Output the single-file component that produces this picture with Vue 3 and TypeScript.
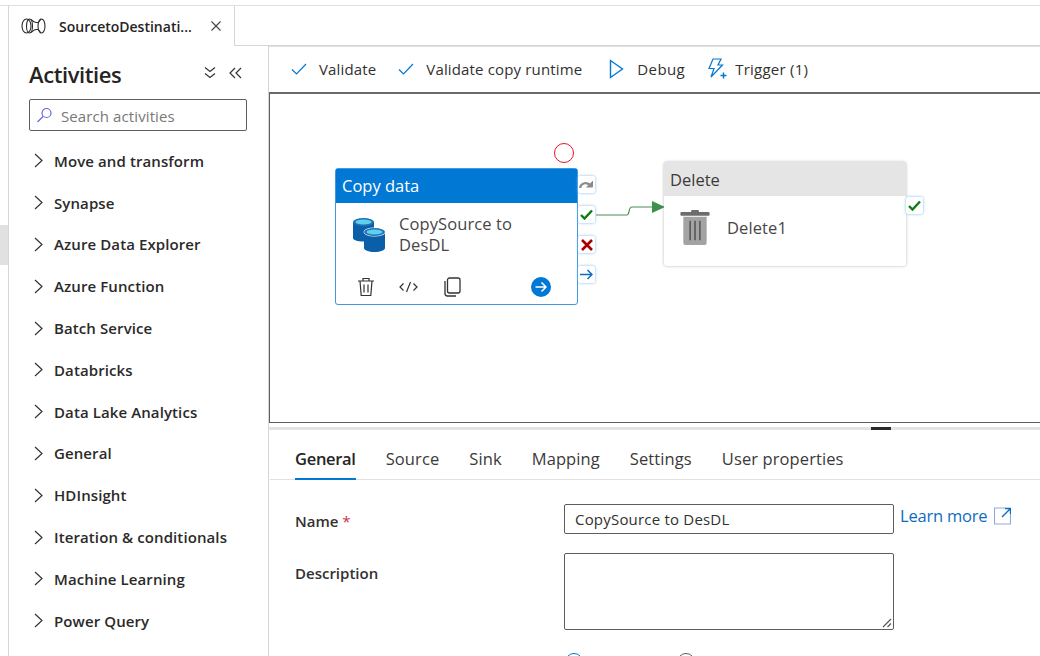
<template>
  <div class="page">
    <div class="rail"><div class="rail-mark"></div></div>
    <div class="main">
      <div class="tabbar">
        <div class="doc-tab">
          <svg class="pipe-icon" width="25" height="16" viewBox="0 0 25 16" fill="none" stroke="#2b2b2b" stroke-width="1.100">
            <ellipse cx="5.500" cy="8" rx="4.500" ry="7" />
            <ellipse cx="8.500" cy="8" rx="3" ry="7" />
            <ellipse cx="20.500" cy="8" rx="3.500" ry="7" />
            <path d="M10 1.500c2 2 4 3 5 3h2c1 0 1.500-2 3-3.500M10 14.500c2-2 4-3 5-3h2c1 0 1.500 2 3 3.500" />
          </svg>
          <span class="doc-title">SourcetoDestinati...</span>
          <svg width="12" height="12" viewBox="0 0 12 12" stroke="#444" stroke-width="1.100"><path d="M1.500 1.500l9 9M10.500 1.500l-9 9" /></svg>
        </div>
        <div class="tab-rest"></div>
      </div>
      <div class="body">
        <aside class="sidebar">
          <div class="side-head">
            <h2>Activities</h2>
            <div class="side-tools">
              <svg width="12" height="13" viewBox="0 0 12 13" fill="none" stroke="#333" stroke-width="1.200"><path d="M1 1.500l5 4 5-4M1 7.500l5 4 5-4" /></svg>
              <svg width="13" height="12" viewBox="0 0 13 12" fill="none" stroke="#333" stroke-width="1.200"><path d="M6 1L1 6l5 5M12 1L7 6l5 5" /></svg>
            </div>
          </div>
          <div class="search">
            <svg width="17" height="17" viewBox="0 0 17 17" fill="none" stroke="#6b69d6" stroke-width="1.200"><circle cx="10.500" cy="6" r="4.500" /><path d="M7 9.500L1.500 15" /></svg>
            <span>Search activities</span>
          </div>
          <ul class="groups">
            <li v-for="g in groups" :key="g">
              <svg width="9" height="15" viewBox="0 0 9 15" fill="none" stroke="#333" stroke-width="1.200"><path d="M1 1l7 6.500L1 14" /></svg>
              <span>{{ g }}</span>
            </li>
          </ul>
        </aside>
        <section class="work">
          <div class="toolbar">
            <div class="tool">
              <svg width="16" height="12" viewBox="0 0 16 12" fill="none" stroke="#0078d4" stroke-width="1.200"><path d="M1 6.500l4.500 4.500L15 1" /></svg>
              <span>Validate</span>
            </div>
            <div class="tool runtime">
              <svg width="16" height="12" viewBox="0 0 16 12" fill="none" stroke="#0078d4" stroke-width="1.200"><path d="M1 6.500l4.500 4.500L15 1" /></svg>
              <span>Validate copy runtime</span>
            </div>
            <div class="tool debug">
              <svg width="15" height="20" viewBox="0 0 15 20" fill="none" stroke="#0078d4" stroke-width="1.400"><path d="M1.500 1.500v17L13.500 10z" /></svg>
              <span>Debug</span>
            </div>
            <div class="tool trigger">
              <svg width="20" height="21" viewBox="0 0 20 21" fill="none" stroke="#0078d4" stroke-width="1.200"><path d="M6 1h8l-3 6h4.500L4 19l3-8.500H2z" /><path d="M13.500 17.500h6M16.500 14.500v6" stroke-width="1.500" /></svg>
              <span>Trigger (1)</span>
            </div>
          </div>
          <div class="canvas">
            <svg class="link" width="70" height="24" viewBox="0 0 70 24" fill="none">
              <path d="M0 18h31c3 0 1-8 5-8h22" stroke="#4c8f54" stroke-width="1.200" />
              <path d="M56 4l13 6-13 6z" fill="#3f8f4d" />
            </svg>

            <div class="breakpoint"></div>

            <div class="node copy">
              <div class="node-head">Copy data</div>
              <div class="node-body">
                <svg width="32" height="34" viewBox="0 0 32 34">
                  <path d="M0 4v16c0 2 4.500 3.500 10.500 3.500S21 22 21 20V4z" fill="#0b5ea8" />
                  <ellipse cx="10.500" cy="4" rx="10.500" ry="4" fill="#1e73b8" />
                  <ellipse cx="10.500" cy="4" rx="8" ry="2.500" fill="#5ed0ec" />
                  <path d="M11 14v16c0 2 4.500 4 10.500 4S32 32 32 30V14z" fill="#0b5ea8" />
                  <ellipse cx="21.500" cy="14" rx="11" ry="4.500" fill="#fff" />
                  <ellipse cx="21.500" cy="14" rx="10.500" ry="4" fill="#1e73b8" />
                  <ellipse cx="21.500" cy="14" rx="8" ry="2.500" fill="#5ed0ec" />
                </svg>
                <span>CopySource to DesDL</span>
              </div>
              <div class="node-actions">
                <svg width="18" height="20" viewBox="0 0 18 20" fill="none" stroke="#333" stroke-width="1.200"><path d="M1 4h16M6 4V1.500h6V4M3 4l1.200 14.500h9.600L15 4M7 7.500v8M11 7.500v8" /></svg>
                <svg class="code" width="19" height="12" viewBox="0 0 19 12" fill="none" stroke="#333" stroke-width="1.200"><path d="M4.500 2.500L1 6l3.500 3.500M14.500 2.500L18 6l-3.500 3.500M11.500 1L7.500 11" /></svg>
                <svg class="clone" width="18" height="20" viewBox="0 0 18 20" fill="none" stroke="#333" stroke-width="1.300"><rect x="4.500" y="1" width="12.500" height="15" rx="2" /><path d="M2 4v12.500A2.500 2.500 0 0 0 4.500 19H13" /></svg>
                <svg class="go" width="20" height="20" viewBox="0 0 20 20"><circle cx="10" cy="10" r="10" fill="#0078d4" /><path d="M4.500 10h10M10.500 5.500l4.500 4.500-4.500 4.500" fill="none" stroke="#fff" stroke-width="1.500" /></svg>
              </div>
              <div class="port p-skip">
                <svg width="15" height="11" viewBox="0 0 15 11" fill="none" stroke="#8a8a8a" stroke-width="2.200"><path d="M1 9c1-5 7-7 11-2" /><path d="M13.500 2v6h-6" fill="#8a8a8a" stroke-width="1" /></svg>
              </div>
              <div class="port p-ok">
                <svg width="13" height="11" viewBox="0 0 13 11" fill="none" stroke="#107c10" stroke-width="2.400"><path d="M1 6l3.500 3.500L12 1.500" /></svg>
              </div>
              <div class="port p-fail">
                <svg width="12" height="12" viewBox="0 0 12 12" fill="none" stroke="#a80000" stroke-width="2.600"><path d="M1 1l10 10M11 1L1 11" /></svg>
              </div>
              <div class="port p-next">
                <svg width="13" height="11" viewBox="0 0 13 11" fill="none" stroke="#0f6cbd" stroke-width="1.500"><path d="M0 5.500h12M7.500 1l4.500 4.500L7.500 10" /></svg>
              </div>
            </div>

            <div class="node del">
              <div class="node-head">Delete</div>
              <div class="node-body">
                <svg width="30" height="35" viewBox="0 0 30 36">
                  <rect x="11" y="0" width="8" height="3" rx="1" fill="#6d6d6d" />
                  <rect x="0" y="2" width="30" height="4" rx="1" fill="#6d6d6d" />
                  <path d="M3 7h24v27a2 2 0 0 1-2 2H5a2 2 0 0 1-2-2z" fill="#a3a3a3" />
                  <path d="M10 11v20M15 11v20M20 11v20" stroke="#5e5e5e" stroke-width="1.800" />
                </svg>
                <span>Delete1</span>
              </div>
              <div class="port p-del">
                <svg width="13" height="11" viewBox="0 0 13 11" fill="none" stroke="#107c10" stroke-width="2.400"><path d="M1 6l3.500 3.500L12 1.500" /></svg>
              </div>
            </div>
          </div>
          <div class="splitter"><div class="grip"></div></div>
          <div class="props">
            <nav class="prop-tabs">
              <a v-for="(t, i) in tabs" :key="t" :class="{ active: i === 0 }">{{ t }}</a>
            </nav>
            <div class="form">
              <label class="lbl name-lbl">Name <em>*</em></label>
              <div class="name-row">
                <div class="input">CopySource to DesDL</div>
                <a class="learn">
                  Learn more
                  <svg width="17" height="18" viewBox="0 0 17 18" fill="none" stroke="#0f6cbd" stroke-width="1.100"><path d="M11 1H.5v16h16V6" stroke="#8fa8e0" /><path d="M8 10l8-8M11 1.500h5.500V7" stroke-width="1.400" /></svg>
                </a>
              </div>
              <label class="lbl desc-lbl">Description</label>
              <div class="area">
                <svg width="10" height="10" viewBox="0 0 10 10" stroke="#555" stroke-width="1.100"><path d="M1 9l8-8M5.500 9L9 5.500" /></svg>
              </div>
              <div></div>
              <div class="radios"><i class="radio on"></i><i class="radio"></i></div>
            </div>
          </div>
        </section>
      </div>
    </div>
  </div>
</template>

<script setup lang="ts">
const groups: string[] = [
  'Move and transform',
  'Synapse',
  'Azure Data Explorer',
  'Azure Function',
  'Batch Service',
  'Databricks',
  'Data Lake Analytics',
  'General',
  'HDInsight',
  'Iteration & conditionals',
  'Machine Learning',
  'Power Query',
]

const tabs: string[] = ['General', 'Source', 'Sink', 'Mapping', 'Settings', 'User properties']
</script>

<style>
html,
body {
  margin: 0;
  overflow: hidden;
  background: #fff;
}
</style>

<style scoped>
.page {
  display: flex;
  width: 1040px;
  height: 656px;
  overflow: hidden;
  box-sizing: border-box;
  padding-top: 5px;
  font-family: "Open Sans", "Noto Sans", sans-serif;
  color: #323130;
  background: #fff;
}

.rail {
  width: 8px;
  flex: none;
  border-top: 1px solid #e0e0e0;
  padding-top: 219px;
  box-sizing: border-box;
}

.rail-mark {
  height: 40px;
  background: #e1e1e1;
}

.main {
  flex: 1;
  min-width: 0;
  display: flex;
  flex-direction: column;
  border-left: 1px solid #d6d6d6;
  border-top: 1px solid #e0e0e0;
}

.tabbar {
  display: flex;
  height: 40px;
  flex: none;
}

.doc-tab {
  width: 226px;
  box-sizing: border-box;
  display: flex;
  align-items: center;
  padding: 0 12px 0 12px;
  border-right: 1px solid #d6d6d6;
}

.doc-title {
  margin-left: 13px;
  flex: 1;
  font-size: 14px;
  font-weight: 600;
  color: #252423;
}

.tab-rest {
  flex: 1;
  border-bottom: 1px solid #d6d6d6;
}

.body {
  flex: 1;
  display: flex;
  min-height: 0;
}

.sidebar {
  width: 260px;
  flex: none;
  box-sizing: border-box;
  padding: 0 21px 0 20px;
  border-right: 1px solid #d6d6d6;
}

.side-head {
  display: flex;
  align-items: center;
  justify-content: space-between;
  height: 53px;
  padding-right: 5px;
}

.side-head h2 {
  margin: 3px 0 0;
  font-size: 22px;
  font-weight: 600;
  letter-spacing: -0.4px;
  color: #252423;
}

.side-tools {
  display: flex;
  align-items: center;
  gap: 13px;
}

.search {
  display: flex;
  align-items: center;
  gap: 8px;
  height: 32px;
  box-sizing: border-box;
  padding: 1px 0 0 6px;
  border: 1px solid #605e5c;
  border-radius: 2px;
  font-size: 15px;
  letter-spacing: 0.1px;
  color: #7a7876;
}

.groups {
  list-style: none;
  margin: 9px 0 0;
  padding: 0;
}

.groups li {
  display: flex;
  align-items: center;
  gap: 11px;
  height: 41.800px;
  padding-left: 5px;
  font-size: 15px;
  font-weight: 600;
  letter-spacing: 0.1px;
  color: #2b2a29;
}

.work {
  flex: 1;
  min-width: 0;
  display: flex;
  flex-direction: column;
}

.toolbar {
  height: 46px;
  flex: none;
  box-sizing: border-box;
  display: flex;
  align-items: center;
  padding: 0 0 2px 22px;
  border-top: 1px solid #e0e0e0;
  font-size: 15px;
  letter-spacing: 0.15px;
  color: #323130;
}

.tool {
  display: flex;
  align-items: center;
  gap: 12px;
  margin-right: 22px;
}

.tool.runtime {
  margin-right: 27px;
}

.tool.debug {
  gap: 13px;
  margin-right: 22px;
  letter-spacing: 0.4px;
}

.tool.trigger {
  gap: 8px;
  letter-spacing: 0.25px;
}

.canvas {
  position: relative;
  height: 331px;
  flex: none;
  box-sizing: border-box;
  border-top: 2px solid #6a6a6a;
  border-left: 1px solid #5f5f5f;
  border-bottom: 1px solid #5f5f5f;
}

.link {
  position: absolute;
  left: 326px;
  top: 103px;
}

.breakpoint {
  position: absolute;
  left: 284px;
  top: 49px;
  width: 20px;
  height: 20px;
  box-sizing: border-box;
  border: 1.500px solid #e81123;
  border-radius: 50%;
}

.node {
  position: absolute;
  box-sizing: border-box;
  background: #fff;
  border-radius: 3px;
}

.node-head {
  height: 34px;
  box-sizing: border-box;
  padding: 0 6px;
  line-height: 34px;
  font-size: 16.500px;
}

.node-body {
  display: flex;
  align-items: center;
  font-size: 16.500px;
  letter-spacing: 0.1px;
  line-height: 21px;
  color: #484644;
}

.copy {
  left: 65px;
  top: 74px;
  width: 243px;
  height: 137px;
  border: 1.500px solid #3f98e2;
}

.copy .node-head {
  background: #0078d4;
  color: #fff;
}

.copy .node-body {
  height: 63px;
  padding: 0 16px 0 17px;
  gap: 14px;
}

.copy .node-body span {
  width: 130px;
  margin-top: -2px;
}

.node-actions {
  display: flex;
  align-items: center;
  height: 36px;
  box-sizing: border-box;
  padding: 6px 26px 0 21px;
}

.node-actions .code {
  margin-left: 24px;
}

.node-actions .clone {
  margin-left: 25px;
}

.node-actions .go {
  margin-left: auto;
}

.port {
  position: absolute;
  width: 17px;
  height: 17px;
  left: 242px;
  display: flex;
  align-items: center;
  justify-content: center;
  background: #fff;
  border-radius: 2px;
  box-shadow: 0 0 3px #7ab6ea;
}

.p-skip {
  top: 7px;
}

.p-ok {
  top: 37px;
}

.p-fail {
  top: 67px;
}

.p-next {
  top: 97px;
}

.del {
  left: 394px;
  top: 68px;
  width: 242px;
  height: 104px;
  box-shadow: 0 0 3px rgba(0, 0, 0, 0.3);
}

.del .node-head {
  padding-top: 1px;
  background: #e5e5e5;
  color: #3b3a39;
}

.del .node-body {
  height: 62px;
  padding: 0 16px;
  gap: 17px;
}

.p-del {
  left: 242px;
  top: 35px;
}

.splitter {
  flex: none;
  height: 7px;
  box-sizing: border-box;
  padding-top: 4px;
  display: flex;
  justify-content: center;
  padding-left: 452px;
  background: linear-gradient(#e3e3e3, #e3e3e3) bottom / 100% 3px no-repeat;
}

.grip {
  width: 20px;
  height: 3px;
  background: #2b2b2b;
}

.props {
  flex: 1;
  min-height: 0;
  padding-left: 1px;
}

.prop-tabs {
  display: flex;
  gap: 30px;
  height: 50px;
  box-sizing: border-box;
  padding-left: 25px;
  border-bottom: 1px solid #e1e1e1;
  font-size: 16.500px;
  letter-spacing: 0.1px;
  color: #3b3a39;
}

.prop-tabs a {
  display: block;
  height: 50px;
  box-sizing: border-box;
  padding-top: 7px;
  line-height: 44px;
}

.prop-tabs .active {
  font-weight: 600;
  letter-spacing: -0.3px;
  color: #252423;
  border-bottom: 2px solid #0078d4;
}

.form {
  display: grid;
  grid-template-columns: 269px 1fr;
  padding: 24px 0 0 25px;
}

.lbl {
  font-size: 15px;
  font-weight: 600;
  color: #323130;
}

.lbl em {
  font-style: normal;
  font-weight: 400;
  color: #c4314b;
}

.name-lbl {
  line-height: 34px;
}

.name-row {
  display: flex;
  align-items: flex-start;
  gap: 6px;
}

.input {
  width: 330px;
  height: 30px;
  box-sizing: border-box;
  padding-left: 10px;
  line-height: 28px;
  border: 1px solid #605e5c;
  border-radius: 2px;
  font-size: 15px;
  letter-spacing: 0.2px;
  color: #323130;
}

.learn {
  display: flex;
  align-items: center;
  gap: 7px;
  font-size: 16.500px;
  letter-spacing: -0.2px;
  color: #0f6cbd;
}

.desc-lbl {
  margin-top: 24px;
  line-height: 22px;
}

.area {
  position: relative;
  width: 330px;
  height: 77px;
  margin-top: 15px;
  box-sizing: border-box;
  border: 1px solid #605e5c;
  border-radius: 2px;
}

.area svg {
  position: absolute;
  right: 1px;
  bottom: 1px;
}

.radios {
  display: flex;
  gap: 94px;
  margin: 23px 0 0 1px;
}

.radio {
  display: block;
  width: 18px;
  height: 18px;
  box-sizing: border-box;
  border: 1.500px solid #605e5c;
  border-radius: 50%;
}

.radio.on {
  border-color: #0078d4;
}
</style>
